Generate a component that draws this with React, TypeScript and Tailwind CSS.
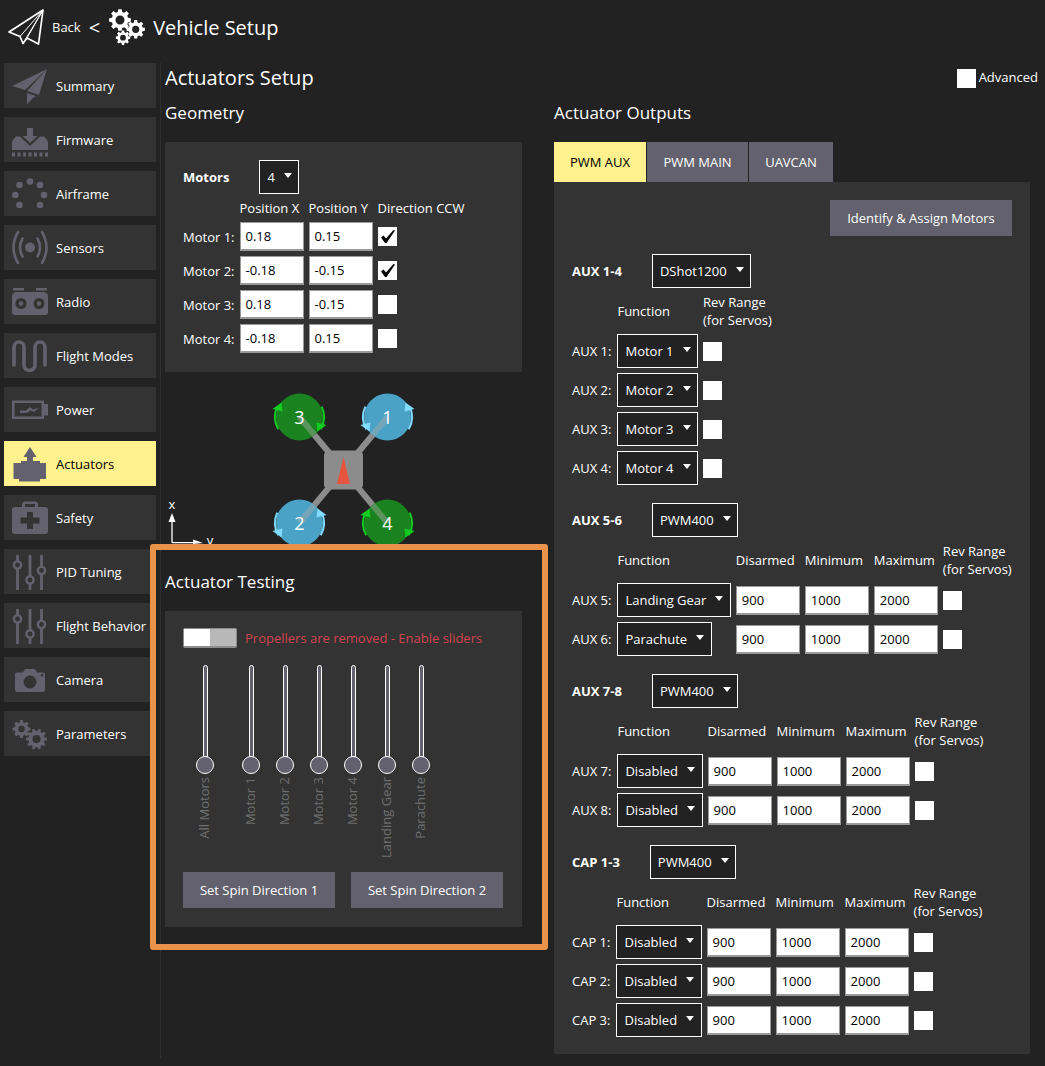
const font = { fontFamily: '"Open Sans", "Noto Sans", sans-serif' };

const ICON = '#62616d';

function gearPath(cx: number, cy: number, r: number, teeth: number, hole: number) {
  const inner = r * 0.76;
  const step = (Math.PI * 2) / teeth;
  let d = '';
  for (let i = 0; i < teeth; i++) {
    const a = i * step;
    const pts: [number, number][] = [
      [inner, a - step * 0.34],
      [r, a - step * 0.2],
      [r, a + step * 0.2],
      [inner, a + step * 0.34],
    ];
    for (const [rad, ang] of pts) {
      d += `${d ? 'L' : 'M'}${(cx + rad * Math.cos(ang)).toFixed(2)} ${(cy + rad * Math.sin(ang)).toFixed(2)}`;
    }
  }
  d += `Z M${cx + hole} ${cy}A${hole} ${hole} 0 1 0 ${cx - hole} ${cy}A${hole} ${hole} 0 1 0 ${cx + hole} ${cy}Z`;
  return d;
}

function Gears({ fill, className }: { fill: string; className?: string }) {
  return (
    <svg viewBox="0 0 36 36" className={className}>
      <path fillRule="evenodd" fill={fill} d={gearPath(11, 11, 11, 8, 4.5)} />
      <path fillRule="evenodd" fill={fill} d={gearPath(26.7, 20.3, 9.3, 8, 3.6)} />
      <path fillRule="evenodd" fill={fill} d={gearPath(14, 28.7, 7.3, 8, 2.9)} />
    </svg>
  );
}

function PlaneOutline() {
  return (
    <svg viewBox="0 0 36 36" className="w-9 h-9" fill="none" stroke="#fff" strokeWidth="1.7" strokeLinejoin="round">
      <path d="M35 1 L1 23 L12 27.5 L15 34.5 L19 29 L30.5 35 Z" />
      <path d="M35 1 L12 27.5 M35 1 L15 34.5 M35 1 L19 29" strokeWidth="1" />
    </svg>
  );
}

function NavIcon({ name }: { name: string }) {
  const common = { viewBox: '0 0 36 36', className: 'w-9 h-9', fill: ICON };
  switch (name) {
    case 'Summary':
      return (
        <svg {...common}>
          <path d="M35 1 L0 18 L13 22 Z M35 1 L15 23 L27 27 Z M15 25 L15 36 L21 30 L24 28 Z" />
        </svg>
      );
    case 'Firmware':
      return (
        <svg {...common}>
          <path d="M15 6 H21 V14 H25.5 L18 21 L10.5 14 H15 Z" />
          <path d="M8 14.5 L18 24 L28 14.5 L32 14.5 Q36 18 36 21 V28 H0 V21 Q0 18 4 14.5 Z" />
          <path d="M0 30.5H3V34.5H0ZM5.5 30.5H8.5V34.5H5.5ZM11 30.5H14V34.5H11ZM16.5 30.5H19.5V34.5H16.5ZM22 30.5H25V34.5H22ZM27.5 30.5H30.5V34.5H27.5ZM33 30.5H36V34.5H33Z" />
        </svg>
      );
    case 'Airframe':
      return (
        <svg {...common}>
          <circle cx="18" cy="5.5" r="3.3" />
          <circle cx="7.5" cy="9" r="3.3" />
          <circle cx="28" cy="9" r="3.3" />
          <circle cx="3.3" cy="19" r="3.3" />
          <circle cx="32" cy="19" r="3.3" />
          <circle cx="7.5" cy="29" r="3.3" />
          <circle cx="28" cy="29" r="3.3" />
        </svg>
      );
    case 'Sensors':
      return (
        <svg {...common}>
          <circle cx="18" cy="17.5" r="5" />
          <g fill="none" stroke={ICON} strokeWidth="2.6" strokeLinecap="round">
            <path d="M10.5 8.5 Q5.5 17.5 10.5 26.5" />
            <path d="M25.5 8.5 Q30.5 17.5 25.5 26.5" />
            <path d="M6 2 Q-3 17.5 6 33" />
            <path d="M30 2 Q39 17.5 30 33" />
          </g>
        </svg>
      );
    case 'Radio':
      return (
        <svg {...common}>
          <path d="M1 4 H12 V6.5 H1 Z M24 4 H35 V6.5 H24 Z" />
          <path d="M5 8 H31 Q36 8 36 13 V28 Q36 31 33 31 H3 Q0 31 0 28 V13 Q0 8 5 8 Z" />
          <circle cx="9" cy="19.5" r="5.5" fill="#333" />
          <circle cx="27" cy="19.5" r="5.5" fill="#333" />
          <circle cx="9" cy="19.5" r="2.2" />
          <circle cx="27" cy="19.5" r="2.2" />
        </svg>
      );
    case 'Flight Modes':
      return (
        <svg {...common} fill="none" stroke={ICON} strokeWidth="3.6" strokeLinecap="round">
          <path d="M2 27 V9 A5 5 0 0 1 12 9 V27 A5.5 5.5 0 0 0 23 27 V9 A5 5 0 0 1 33 9 V27" />
        </svg>
      );
    case 'Power':
      return (
        <svg {...common}>
          <path fillRule="evenodd" d="M0 8.5 H32 V12 H36 V23.5 H32 V27 H0 Z M2.5 11 V24.5 H29.5 V11 Z" />
          <path d="M8 18.5 L14 18.5 L18 15 L21 17.5 L27 16 L22 20 L18.5 18.5 L15 21 H8 Z" />
        </svg>
      );
    case 'Actuators':
      return (
        <svg {...common}>
          <path d="M18 1 L24.5 11 H21 V15 H28 V17 H34 V33 H1.5 V17 H9 V15 H15 V11 H11.5 Z" />
          <path d="M7 33 H28 V35.5 H7 Z" />
        </svg>
      );
    case 'Safety':
      return (
        <svg {...common}>
          <path
            fillRule="evenodd"
            d="M10 7 V4.5 Q10 1.5 13 1.5 H23 Q26 1.5 26 4.5 V7 H33 Q36 7 36 10 V31 Q36 34 33 34 H3 Q0 34 0 31 V10 Q0 7 3 7 Z M13 7 H23 V4 H13 Z M15 12 V17.5 H8.5 V23.5 H15 V29 H21 V23.5 H27.5 V17.5 H21 V12 Z"
          />
        </svg>
      );
    case 'PID Tuning':
    case 'Flight Behavior':
      return (
        <svg {...common} fill="none" stroke={ICON}>
          <path d="M5.5 1 V36 M18 1 V36 M29.5 1 V36" strokeWidth="2.8" />
          <circle cx="5.5" cy="11" r="3.6" fill="#333" strokeWidth="2.4" />
          <circle cx="18" cy="26" r="3.6" fill="#333" strokeWidth="2.4" />
          <circle cx="29.5" cy="16.5" r="3.6" fill="#333" strokeWidth="2.4" />
        </svg>
      );
    case 'Camera':
      return (
        <svg {...common}>
          <path
            fillRule="evenodd"
            d="M5 10.5 H11 L13 7 H23 L25 10.5 H31 Q33 10.5 33 12.5 V28 Q33 30 31 30 H5 Q3 30 3 28 V12.5 Q3 10.5 5 10.5 Z M18 13.5 A6.5 6.5 0 1 0 18.01 26.5 A6.5 6.5 0 1 0 18 13.5 Z M30 12 A1.2 1.2 0 1 0 30.01 14.4 A1.2 1.2 0 1 0 30 12 Z"
          />
        </svg>
      );
    default:
      return (
        <svg {...common}>
          <path fillRule="evenodd" d={gearPath(9.5, 13, 9, 8, 3.2)} />
          <path fillRule="evenodd" d={gearPath(24.5, 23, 10.5, 10, 4)} />
        </svg>
      );
  }
}

const navItems = [
  'Summary',
  'Firmware',
  'Airframe',
  'Sensors',
  'Radio',
  'Flight Modes',
  'Power',
  'Actuators',
  'Safety',
  'PID Tuning',
  'Flight Behavior',
  'Camera',
  'Parameters',
];

function Sidebar() {
  return (
    <div className="w-[152px] ml-1 flex flex-col gap-[9px] shrink-0">
      {navItems.map(item => (
        <div
          key={item}
          className={`h-[45px] flex items-center pl-2 gap-2 text-[13px] whitespace-nowrap ${
            item === 'Actuators' ? 'bg-[#fff18d] text-black' : 'bg-[#333333] text-white'
          }`}
        >
          <NavIcon name={item} />
          <span className="pt-[2px]">{item}</span>
        </div>
      ))}
    </div>
  );
}

function Select({ label }: { label: string }) {
  return (
    <div className="h-[34px] inline-flex items-center gap-[9px] pl-[7px] pr-[6.5px] pt-px bg-[#222222] border border-white text-white text-[13px] whitespace-nowrap justify-self-start">
      {label}
      <span className="w-0 h-0 mb-[4px] border-x-[4px] border-x-transparent border-t-[5px] border-t-white" />
    </div>
  );
}

function Field({ value }: { value: string }) {
  return (
    <div className="h-[29px] w-16 bg-white border border-[#9a9a9a] border-b-2 flex items-center pl-[5px] pt-[2px] text-black text-[13px]">
      {value}
    </div>
  );
}

function Check({ checked }: { checked?: boolean }) {
  return (
    <div className="w-[19px] h-[19px] bg-white flex items-center justify-center">
      {checked && (
        <svg viewBox="0 0 19 19" className="w-[19px] h-[19px]">
          <path d="M3 10.5 L5.5 8.5 L8 11.5 L15.5 3 L17 3.5 L8.5 16 L7 16 Z" fill="#000" />
        </svg>
      )}
    </div>
  );
}

function Geometry() {
  const motors = [
    ['Motor 1:', '0.18', '0.15', true],
    ['Motor 2:', '-0.18', '-0.15', true],
    ['Motor 3:', '0.18', '-0.15', false],
    ['Motor 4:', '-0.18', '0.15', false],
  ] as const;

  return (
    <div className="bg-[#333333] w-[357px] h-[230px] pt-[18px] pl-[18px] text-white text-[13px]">
      <div className="flex items-center gap-[30px] mb-[5px]">
        <span className="font-bold pt-px">Motors</span>
        <Select label="4" />
      </div>
      <div className="grid grid-cols-[auto_64px_64px_auto] gap-x-[5px] gap-y-[5px] items-center justify-start">
        <span />
        <span className="h-[18px] leading-[18px]">Position X</span>
        <span className="h-[18px] leading-[18px]">Position Y</span>
        <span className="h-[18px] leading-[18px]">Direction CCW</span>
        {motors.map(([label, x, y, ccw]) => (
          <div key={label} className="contents">
            <span className="pt-[2px]">{label}</span>
            <Field value={x} />
            <Field value={y} />
            <Check checked={ccw} />
          </div>
        ))}
      </div>
    </div>
  );
}

const BODY = { x: 178.5, y: 98 };

function Rotor({ x, y, n, ccw }: { x: number; y: number; n: number; ccw: boolean }) {
  const disc = ccw ? '#4aa3c6' : '#1a831f';
  const arc = ccw ? '#80dcff' : '#12cc22';
  const r = 24.5;
  const a = (deg: number) => `${x + r * Math.cos((deg * Math.PI) / 180)} ${y + r * Math.sin((deg * Math.PI) / 180)}`;
  // clockwise rotors have the head at the upper left and lower right, the others are mirrored
  const m = ccw ? -1 : 1;
  const head = (sx: number, sy: number) =>
    `M${x + sx * m * 27} ${y + sy * 8} L${x + sx * m * 18} ${y + sy * 14.5} L${x + sx * m * 17} ${y + sy * 5.5} Z`;
  const len = Math.hypot(BODY.x - x, BODY.y - y);
  const armX = x + ((BODY.x - x) / len) * 23;
  const armY = y + ((BODY.y - y) / len) * 23;
  return (
    <g>
      <circle cx={x} cy={y} r={23.5} fill={disc} />
      <path d={`M${a(205)} A${r} ${r} 0 0 0 ${a(150)}`} fill="none" stroke={arc} strokeWidth="2" />
      <path d={`M${a(-25)} A${r} ${r} 0 0 1 ${a(30)}`} fill="none" stroke={arc} strokeWidth="2" />
      <path d={head(-1, -1)} fill={arc} />
      <path d={head(1, 1)} fill={arc} />
      <path d={`M${x} ${y} L${armX} ${armY}`} stroke="#a8a8a8" strokeOpacity="0.45" strokeWidth="6" />
      <text x={x} y={y + 6.5} textAnchor="middle" fill="#fff" fontSize="18" style={font}>
        {n}
      </text>
    </g>
  );
}

function Diagram() {
  return (
    <svg viewBox="0 0 357 176" className="w-[357px] h-[176px] block">
      <path
        d="M134.5 45 L178.5 98 M222.5 45 L178.5 98 M134.5 151 L178.5 98 M222.5 151 L178.5 98"
        stroke="#8c8c8c"
        strokeWidth="6"
      />
      <Rotor x={134.5} y={45} n={3} ccw={false} />
      <Rotor x={222.5} y={45} n={1} ccw />
      <Rotor x={134.5} y={151} n={2} ccw />
      <Rotor x={222.5} y={151} n={4} ccw={false} />
      <rect x={159} y={78.5} width={39} height={39} rx={5} fill="#8c8c8c" />
      <path d="M178.5 85 L185 112 H172 Z" fill="#e8553f" />
      <path d="M7 170.7 V148 M7 170.7 H30" stroke="#fff" strokeWidth="1.3" fill="none" />
      <path d="M7 141 L10.5 150 H3.5 Z" fill="#fff" />
      <path d="M28 167.5 L38 171 L28 172 Z" fill="#fff" />
      <text x={7} y={137} textAnchor="middle" fill="#fff" fontSize="13" style={font}>x</text>
      <text x={45} y={173} textAnchor="middle" fill="#fff" fontSize="13" style={font}>y</text>
    </svg>
  );
}

const sliders = ['Motor 1', 'Motor 2', 'Motor 3', 'Motor 4', 'Landing Gear', 'Parachute'];

function Slider({ label }: { label: string }) {
  return (
    <div className="w-[18px] flex flex-col items-center">
      <div className="w-[5px] h-[92px] bg-[#62616d] border border-white rounded-t-full" />
      <div className="w-[18px] h-[18px] rounded-full bg-[#62616d] border border-white -mt-[1px]" />
      <div className="h-[92px] mt-[3px] flex justify-center -translate-x-px">
        <span className="[writing-mode:vertical-rl] rotate-180 text-[13px] leading-[18px] text-[#6e6e6e] whitespace-nowrap h-fit">
          {label}
        </span>
      </div>
    </div>
  );
}

function ActuatorTesting() {
  return (
    <div className="absolute left-[150px] top-[544px] w-[398px] h-[406px] border-[6px] border-[#e8924a] rounded-[3px] bg-[#222222] pl-[9px] pt-[19px]">
      <div className="absolute left-[4px] top-0 bottom-0 w-px bg-[#2f2f2f]" />
      <div className="text-white text-[17px] leading-[26px]">Actuator Testing</div>
      <div className="mt-[16px] w-[357px] h-[316px] bg-[#333333] pl-[18px] pt-[17px]">
        <div className="flex items-center gap-2 h-5">
          <div className="w-[54px] h-[20px] flex border border-[#8c8c8c] rounded-[2px] bg-[#b8b8b8] border-b-2">
            <div className="w-[26px] bg-white" />
          </div>
          <span className="text-[13px] text-[#d2434f] pt-px">Propellers are removed - Enable sliders</span>
        </div>
        <div className="flex mt-[17px] ml-[13px] gap-4">
          <div className="mr-3">
            <Slider label="All Motors" />
          </div>
          {sliders.map(s => (
            <Slider key={s} label={s} />
          ))}
        </div>
        <div className="flex gap-4 mt-[3px]">
          <Button label="Set Spin Direction 1" w="w-[152px]" />
          <Button label="Set Spin Direction 2" w="w-[152px]" />
        </div>
      </div>
    </div>
  );
}

function Button({ label, w }: { label: string; w: string }) {
  return (
    <div className={`${w} h-9 pt-px bg-[#62616d] text-white text-[13px] flex items-center justify-center`}>
      {label}
    </div>
  );
}

interface OutputRow {
  label: string;
  fn: string;
}

function OutputGroup({
  title,
  protocol,
  rows,
  servo,
}: {
  title: string;
  protocol: string;
  rows: OutputRow[];
  servo: boolean;
}) {
  return (
    <div className="flex flex-col gap-[5px]">
      <div className="flex items-center gap-[30px]">
        <span className="font-bold pt-px">{title}</span>
        <Select label={protocol} />
      </div>
      <div
        className={`grid gap-x-[5px] gap-y-[5px] items-center justify-start ${
          servo ? 'grid-cols-[auto_auto_64px_64px_64px_auto]' : 'grid-cols-[auto_auto_auto]'
        }`}
      >
        <span />
        <span className="pt-px">Function</span>
        {servo && (
          <>
            <span className="pt-px">Disarmed</span>
            <span className="pt-px">Minimum</span>
            <span className="pt-px">Maximum</span>
          </>
        )}
        <span className="leading-[18px]">
          Rev Range
          <br />
          (for Servos)
        </span>
        {rows.map(row => (
          <div key={row.label} className="contents">
            <span className="pt-px pr-px">{row.label}</span>
            <Select label={row.fn} />
            {servo && (
              <>
                <Field value="900" />
                <Field value="1000" />
                <Field value="2000" />
              </>
            )}
            <Check />
          </div>
        ))}
      </div>
    </div>
  );
}

function Outputs() {
  return (
    <div className="w-[476px] flex flex-col text-white text-[13px]">
      <div className="flex gap-px h-10">
        <div className="w-[92px] pt-px bg-[#fff18d] text-black flex items-center justify-center">PWM AUX</div>
        <div className="w-[101px] pt-px bg-[#62616d] flex items-center justify-center">PWM MAIN</div>
        <div className="w-[84px] pt-px bg-[#62616d] flex items-center justify-center">UAVCAN</div>
      </div>
      <div className="bg-[#333333] h-[872px] pt-[18px] pl-[18px] flex flex-col gap-[18px]">
        <div className="flex justify-end pr-[18px]">
          <Button label="Identify & Assign Motors" w="w-[182px]" />
        </div>
        <OutputGroup
          title="AUX 1-4"
          protocol="DShot1200"
          servo={false}
          rows={[
            { label: 'AUX 1:', fn: 'Motor 1' },
            { label: 'AUX 2:', fn: 'Motor 2' },
            { label: 'AUX 3:', fn: 'Motor 3' },
            { label: 'AUX 4:', fn: 'Motor 4' },
          ]}
        />
        <OutputGroup
          title="AUX 5-6"
          protocol="PWM400"
          servo
          rows={[
            { label: 'AUX 5:', fn: 'Landing Gear' },
            { label: 'AUX 6:', fn: 'Parachute' },
          ]}
        />
        <OutputGroup
          title="AUX 7-8"
          protocol="PWM400"
          servo
          rows={[
            { label: 'AUX 7:', fn: 'Disabled' },
            { label: 'AUX 8:', fn: 'Disabled' },
          ]}
        />
        <OutputGroup
          title="CAP 1-3"
          protocol="PWM400"
          servo
          rows={[
            { label: 'CAP 1:', fn: 'Disabled' },
            { label: 'CAP 2:', fn: 'Disabled' },
            { label: 'CAP 3:', fn: 'Disabled' },
          ]}
        />
      </div>
    </div>
  );
}

export default function App() {
  return (
    <div style={font} className="relative w-[1045px] h-[1066px] bg-[#222222] overflow-hidden">
      <div className="h-[63px] flex items-start pt-[9px] pl-2 text-white">
        <PlaneOutline />
        <span className="ml-2 mt-[9px] text-[13px]">Back</span>
        <span className="ml-[8px] mt-[4px] text-[20px]">&lt;</span>
        <Gears fill="#fff" className="w-9 h-9 ml-[9px]" />
        <span className="ml-2 mt-[4px] text-[20px]">Vehicle Setup</span>
      </div>
      <div className="flex">
        <Sidebar />
        <div className="w-px h-[995px] bg-[#2f2f2f] ml-1 mr-1 shrink-0" />
        <div className="w-[880px] pr-[15px]">
          <div className="flex justify-between h-[29px]">
            <span className="text-white text-[20px] leading-[30px]">Actuators Setup</span>
            <div className="flex items-center gap-[3px] text-white text-[13px] h-[30px] mr-[-8px]">
              <div className="w-[19px] h-[19px] bg-white" />
              Advanced
            </div>
          </div>
          <div className="flex gap-8 mt-[8px]">
            <div className="w-[357px]">
              <div className="text-white text-[17px] leading-[26px] h-[42px]">Geometry</div>
              <Geometry />
              <Diagram />
            </div>
            <div>
              <div className="text-white text-[17px] leading-[26px] h-[42px]">Actuator Outputs</div>
              <Outputs />
            </div>
          </div>
        </div>
      </div>
      <ActuatorTesting />
    </div>
  );
}
